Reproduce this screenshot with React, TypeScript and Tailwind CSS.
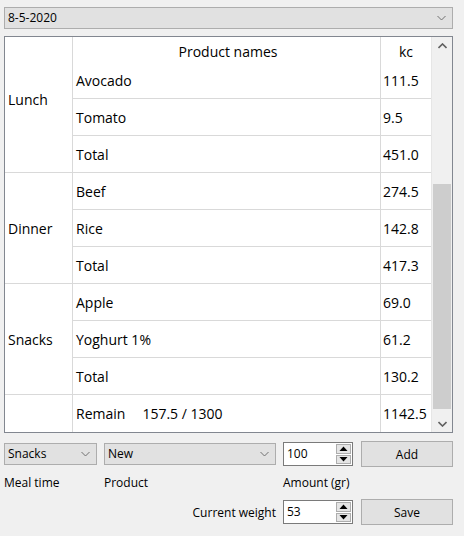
import React from "react";

const groups = [
  {
    name: "Lunch",
    rows: [
      ["Avocado", "111.5"],
      ["Tomato", "9.5"],
      ["Total", "451.0"],
    ],
  },
  {
    name: "Dinner",
    rows: [
      ["Beef", "274.5"],
      ["Rice", "142.8"],
      ["Total", "417.3"],
    ],
  },
  {
    name: "Snacks",
    rows: [
      ["Apple", "69.0"],
      ["Yoghurt 1%", "61.2"],
      ["Total", "130.2"],
    ],
  },
];

function Chevron({ up = false, bold = false }: { up?: boolean; bold?: boolean }) {
  return (
    <svg width="9" height="6" viewBox="0 0 9 6" className="shrink-0">
      <polyline
        points={up ? "0.5,5 4.5,1 8.5,5" : "0.5,1 4.5,5 8.5,1"}
        fill="none"
        stroke={bold ? "#606060" : "#707070"}
        strokeWidth={bold ? 1.6 : 1}
      />
    </svg>
  );
}

function Combo({ label, className }: { label: string; className: string }) {
  return (
    <div
      className={`flex h-[22px] items-center justify-between border border-[#adadad] bg-[#e1e1e1] pl-[3px] pr-[6px] ${className}`}
    >
      <span>{label}</span>
      <Chevron />
    </div>
  );
}

function SpinBox({ value }: { value: string }) {
  return (
    <div className="flex h-[24px] w-[70px] items-center border border-[#7a7a7a] bg-white pl-[3px] pr-[1px]">
      <span className="flex-1">{value}</span>
      <div className="flex h-[20px] w-[15px] flex-col gap-px">
        {["M0.5,5 L4.5,0.5 L8.5,5 Z", "M0.5,0 L4.5,4.5 L8.5,0 Z"].map((d) => (
          <div
            key={d}
            className="flex flex-1 items-center justify-center border border-[#adadad] bg-[#e5e5e5]"
          >
            <svg width="9" height="5" viewBox="0 0 9 5">
              <path d={d} fill="#000" />
            </svg>
          </div>
        ))}
      </div>
    </div>
  );
}

function Button({ label }: { label: string }) {
  return (
    <div className="flex h-[26px] w-[92px] items-center justify-center border border-[#adadad] bg-[#e1e1e1] pt-px">
      {label}
    </div>
  );
}

export default function App() {
  return (
    <div
      className="h-[536px] w-[464px] bg-[#f0f0f0] pl-[4px] pr-[11px] pt-[7px] text-[12px] text-black"
      style={{ fontFamily: '"Open Sans", "Noto Sans", sans-serif' }}
    >
      <Combo label="8-5-2020" className="w-full" />

      {/* table */}
      <div className="mt-[7px] flex h-[397px] border border-[#828790] bg-white text-[14px]">
        <div className="grid w-[426px] grid-cols-[68px_308px_50px] grid-rows-[25px_repeat(10,37px)]">
          <div className="row-span-4 flex items-center border-r border-b border-[#d9d9d9] pb-[11px] pl-[3px]">
            Lunch
          </div>
          <div className="flex items-end justify-center border-r border-[#d9d9d9] pl-[3px]">
            Product names
          </div>
          <div className="flex items-end justify-center">kc</div>
          {groups.map((g, gi) => (
            <React.Fragment key={g.name}>
              {gi > 0 && (
                <div className="row-span-3 flex items-center border-r border-b border-[#d9d9d9] pl-[3px]">
                  {g.name}
                </div>
              )}
              {g.rows.map(([name, kc], ri) => (
                <React.Fragment key={ri}>
                  <div className="flex items-center border-r border-b border-[#d9d9d9] pl-[3px]">
                    {name}
                  </div>
                  <div className="flex items-center border-b border-[#d9d9d9] pl-[2px]">
                    {kc}
                  </div>
                </React.Fragment>
              ))}
            </React.Fragment>
          ))}
          <div className="border-r border-[#d9d9d9]" />
          <div className="flex items-center border-r border-[#d9d9d9] pl-[3px]">
            <span>Remain</span>
            <span className="ml-[17px]">157.5 / 1300</span>
          </div>
          <div className="flex items-center pl-[2px]">1142.5</div>
        </div>

        {/* scrollbar */}
        <div className="flex w-[21px] flex-col border-l border-[#e6e6e6] bg-[#f0f0f0]">
          <div className="flex h-[17px] items-center justify-center">
            <Chevron up bold />
          </div>
          <div className="flex-1 pt-[130px] pb-[2px] px-px">
            <div className="h-[225px] bg-[#cdcdcd]" />
          </div>
          <div className="flex h-[17px] items-center justify-center">
            <Chevron bold />
          </div>
        </div>
      </div>

      {/* inputs */}
      <div className="mt-[8px] flex h-[26px] items-center">
        <Combo label="Snacks" className="w-[93px]" />
        <Combo label="New" className="ml-[7px] w-[172px]" />
        <div className="ml-[7px]">
          <SpinBox value="100" />
        </div>
        <div className="ml-[8px]">
          <Button label="Add" />
        </div>
      </div>

      <div className="mt-[8px] flex h-[17px] items-end">
        <span className="w-[100px]">Meal time</span>
        <span className="w-[179px]">Product</span>
        <span>Amount (gr)</span>
      </div>

      <div className="mt-[7px] flex h-[26px] items-center justify-end">
        <span className="pt-px">Current weight</span>
        <div className="ml-[7px]">
          <SpinBox value="53" />
        </div>
        <div className="ml-[8px]">
          <Button label="Save" />
        </div>
      </div>
    </div>
  );
}
